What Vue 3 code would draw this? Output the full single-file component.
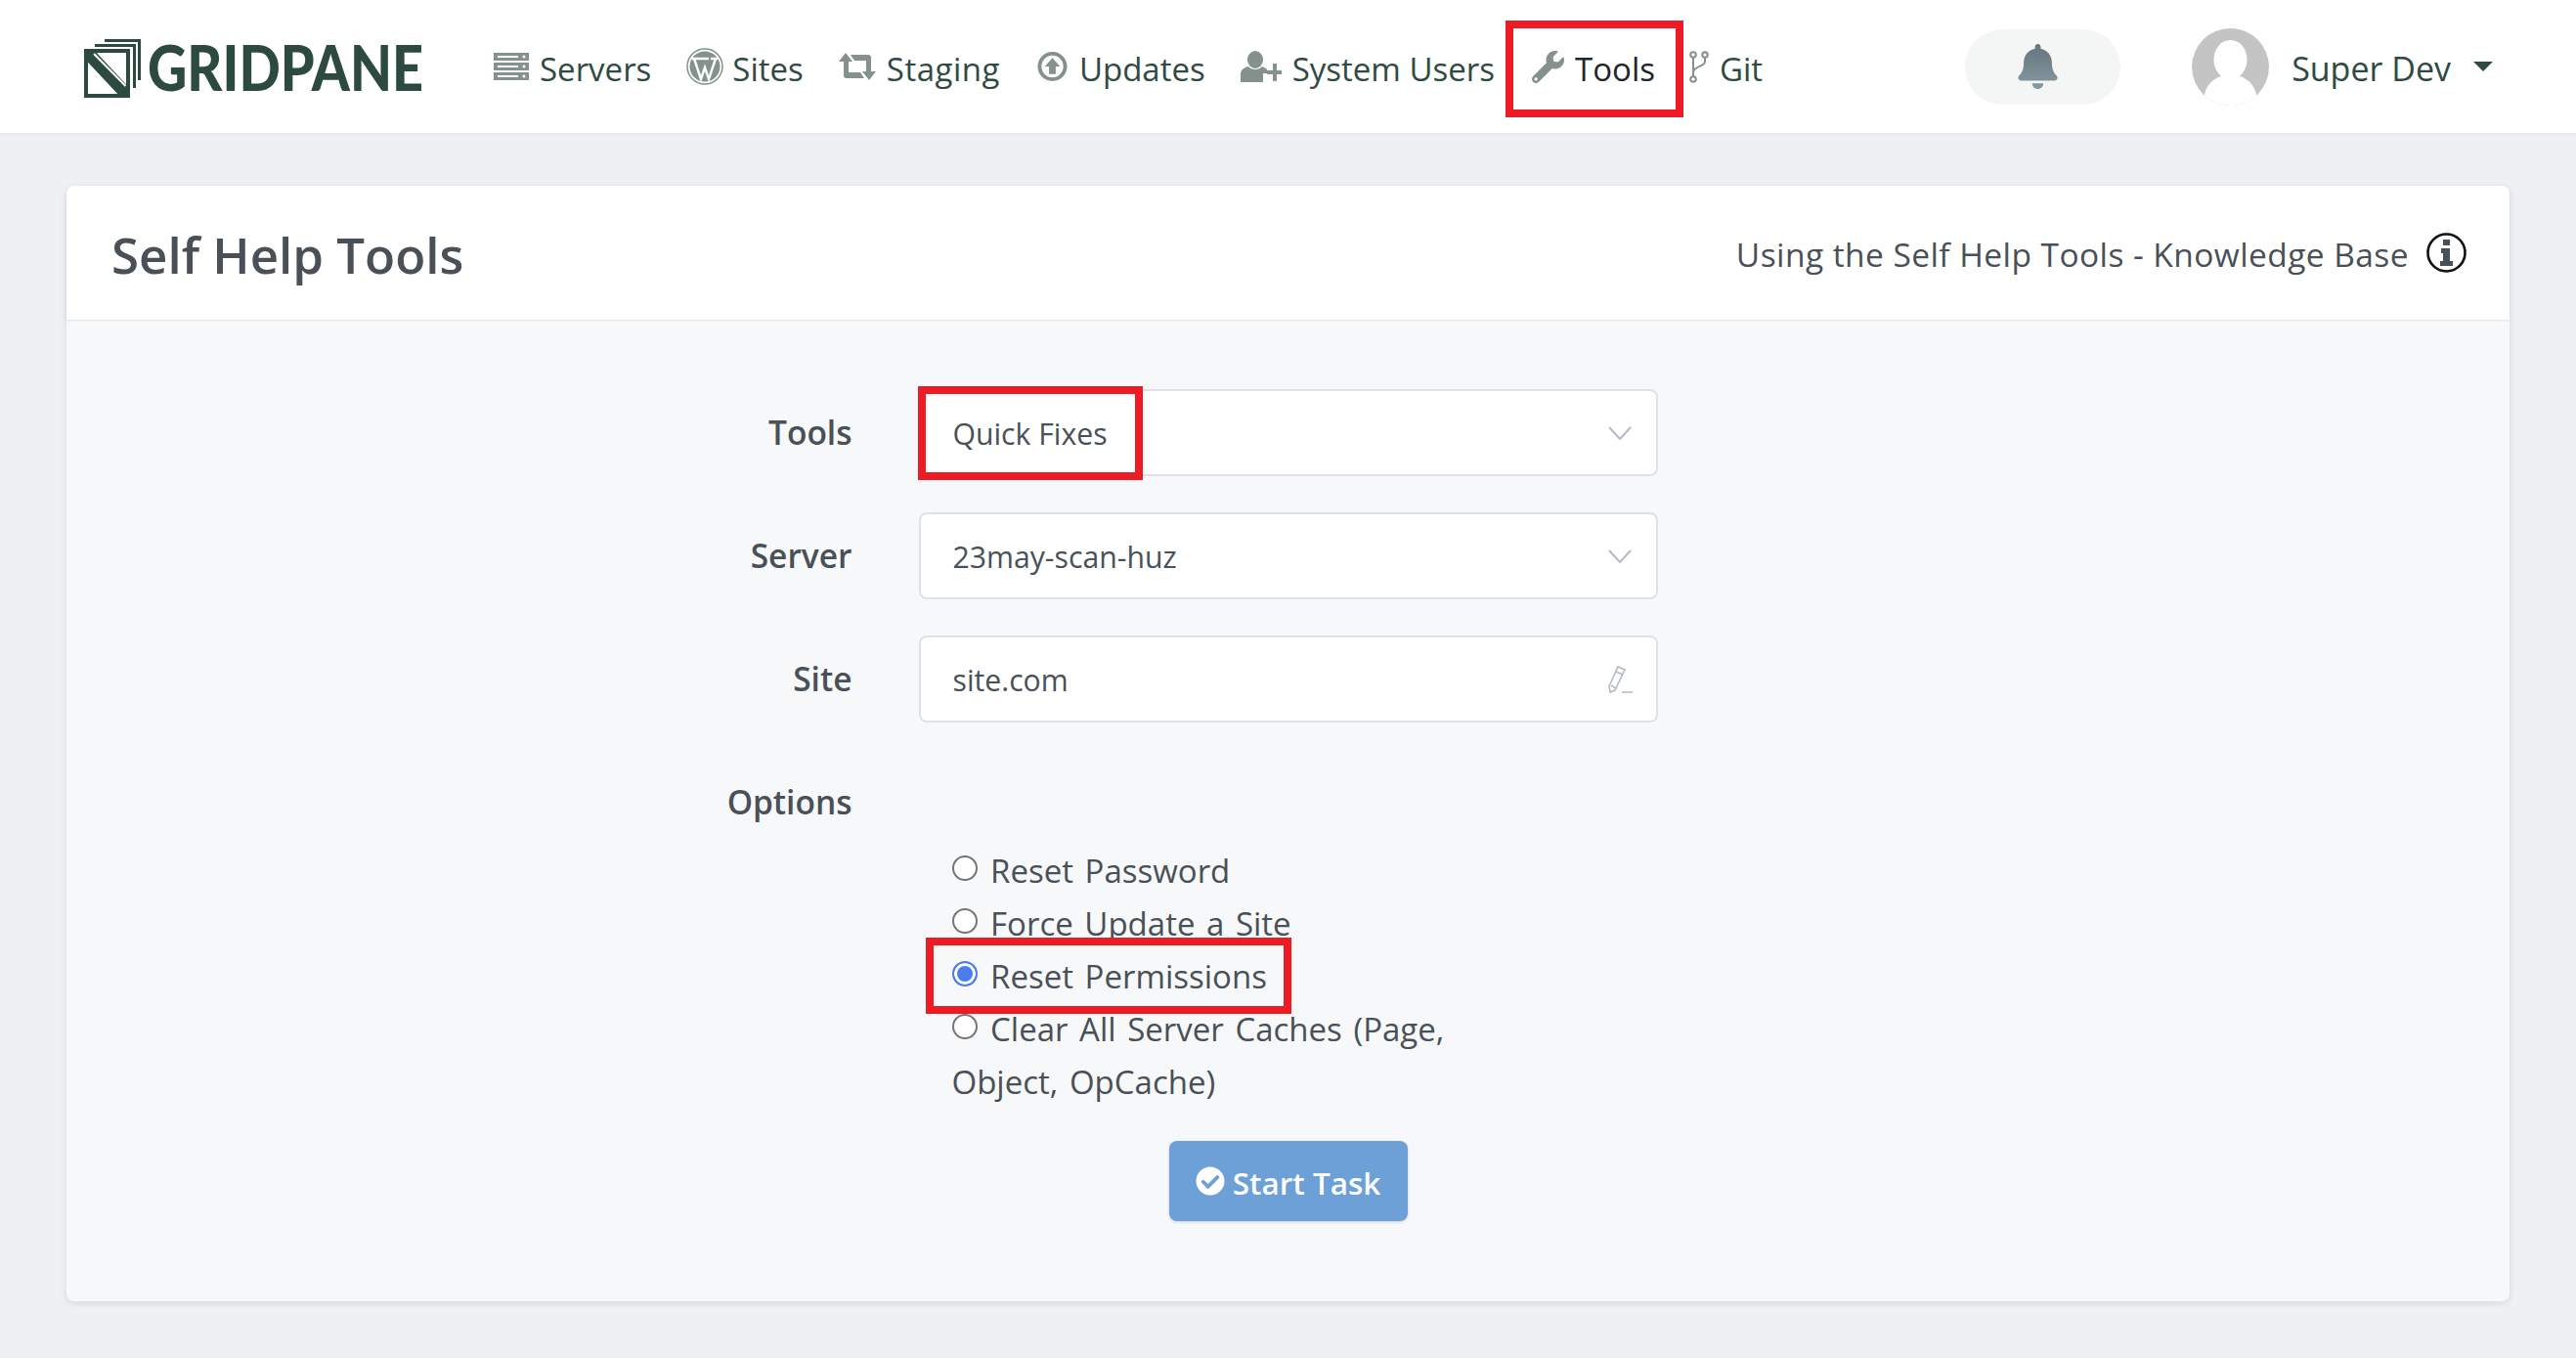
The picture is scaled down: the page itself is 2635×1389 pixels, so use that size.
<template>
  <div class="page">
    <nav class="topbar">
      <svg class="logo" width="350" height="64" viewBox="0 0 350 64">
        <defs>
          <clipPath id="paneclip"><rect x="0" y="14" width="47" height="50" /></clipPath>
        </defs>
        <g fill="none" stroke="#2d4a3e">
          <path d="M21 5.5H56.5V46" stroke-width="3" />
          <path d="M11 10.5H51.5V54" stroke-width="3" />
          <rect x="2" y="16" width="43" height="46" stroke-width="4" />
          <path d="M1 15L46 63" stroke-width="13" clip-path="url(#paneclip)" />
          <path d="M10 19L42.5 52" stroke="#fff" stroke-width="2" />
        </g>
        <text class="wordmark" x="65" y="57" textLength="282" lengthAdjust="spacingAndGlyphs">GRIDPANE</text>
      </svg>
      <ul class="menu">
        <li class="menu-item">
          <svg width="36" height="28" viewBox="0 0 36 28" fill="#84918c">
            <path d="M0 0h36v8H0zM0 10h36v8H0zM0 20h36v8H0z" />
            <path d="M4 3h21v2H4zM4 13h21v2H4zM4 23h21v2H4z" fill="#fff" />
            <circle cx="31" cy="4" r="1.5" fill="#fff" /><circle cx="31" cy="14" r="1.5" fill="#fff" /><circle cx="31" cy="24" r="1.5" fill="#fff" />
          </svg>
          <span>Servers</span>
        </li>
        <li class="menu-item">
          <svg width="38" height="38" viewBox="0 0 38 38">
            <circle cx="19" cy="19" r="18" fill="none" stroke="#84918c" stroke-width="1.5" />
            <circle cx="19" cy="19" r="15.5" fill="#84918c" />
            <path d="M8 11L15 32L19 20L23 32L30 11M6 11h9M14 11h9M25 11h7" fill="none" stroke="#fff" stroke-width="2.4" />
          </svg>
          <span>Sites</span>
        </li>
        <li class="menu-item">
          <svg width="38" height="28" viewBox="0 0 38 28" fill="#84918c">
            <path d="M7 0L14 9H10V20H22L26 26H8C6 26 5 25 5 23V9H0z" />
            <path d="M31 28L24 19H28V8H16L12 2H30C32 2 33 3 33 5V19H38z" />
          </svg>
          <span class="wide">Staging</span>
        </li>
        <li class="menu-item">
          <svg width="31" height="32" viewBox="0 0 32 32">
            <circle cx="16" cy="16" r="13.5" fill="none" stroke="#84918c" stroke-width="4" />
            <path d="M16 7L24 16H19.5V24H12.5V16H8z" fill="#84918c" />
          </svg>
          <span>Updates</span>
        </li>
        <li class="menu-item">
          <svg width="42" height="32" viewBox="0 0 42 32" fill="#84918c">
            <ellipse cx="15" cy="9" rx="8" ry="9" />
            <path d="M0 32V24C0 19 4 17 8 16C11 20 19 20 22 16C24 17 26 18 27 19V23H23V32z" />
            <path d="M33 13H37V20H42V24H37V31H33V24H27V20H33z" />
          </svg>
          <span>System Users</span>
        </li>
        <li class="menu-item active">
          <svg width="33" height="33" viewBox="0 0 512 512" fill="#84918c">
            <path d="M507.73 109.1c-2.24-9.03-13.54-12.09-20.12-5.51l-74.36 74.36-67.88-11.31-11.31-67.88 74.36-74.36c6.62-6.62 3.43-17.9-5.66-20.16-47.38-11.74-99.55.91-136.58 37.93-39.64 39.64-50.55 97.1-34.05 147.2L18.74 402.76c-24.99 24.99-24.99 65.51 0 90.5 24.99 24.99 65.51 24.99 90.5 0l213.21-213.21c50.12 16.71 107.47 5.68 147.37-34.22 37.07-37.07 49.7-89.32 37.91-136.73zM64 472c-13.25 0-24-10.75-24-24 0-13.26 10.75-24 24-24s24 10.74 24 24c0 13.25-10.75 24-24 24z" />
          </svg>
          <span>Tools</span>
          <i class="mark mark-nav"></i>
        </li>
        <li class="menu-item">
          <svg width="20" height="33" viewBox="0 0 20 33" fill="none" stroke="#84918c" stroke-width="2">
            <circle cx="4" cy="4" r="2.8" />
            <circle cx="16" cy="4" r="2.8" />
            <circle cx="4" cy="29" r="2.8" />
            <path d="M4 7V26M16 7V11C16 16 4 16 4 22" />
          </svg>
          <span>Git</span>
        </li>
      </ul>
      <div class="bell-pill">
        <svg width="41" height="46" viewBox="0 0 448 512">
          <defs>
            <linearGradient id="bellfill" x1="0" y1="0" x2="0" y2="1">
              <stop offset="0" stop-color="#66747f" />
              <stop offset="1" stop-color="#869aa0" />
            </linearGradient>
          </defs>
          <path fill="url(#bellfill)" d="M224 512c35.32 0 63.97-28.65 63.97-64H160.03c0 35.35 28.65 64 63.97 64zm215.39-149.71c-19.32-20.76-55.47-51.99-55.47-154.29 0-77.7-54.48-139.9-127.94-155.16V32c0-17.67-14.32-32-31.98-32s-31.98 14.33-31.98 32v20.84C118.56 68.1 64.08 130.3 64.08 208c0 102.3-36.15 133.53-55.47 154.29-6 6.45-8.66 14.16-8.61 21.71.11 16.4 12.98 32 32.1 32h383.8c19.12 0 32-15.6 32.1-32 .05-7.55-2.61-15.27-8.61-21.71z" />
        </svg>
      </div>
      <div class="account">
        <svg width="79" height="79" viewBox="0 0 79 79">
          <defs>
            <clipPath id="avatarclip"><circle cx="39.5" cy="39.5" r="39.5" /></clipPath>
          </defs>
          <g clip-path="url(#avatarclip)">
            <rect width="79" height="79" fill="#c4c4c4" />
            <ellipse cx="39.5" cy="32" rx="17" ry="20" fill="#fff" />
            <ellipse cx="39.5" cy="72" rx="27" ry="25" fill="#fff" />
          </g>
        </svg>
        <span class="account-name">Super Dev</span>
        <i class="caret"></i>
      </div>
    </nav>

    <section class="card">
      <header class="card-head">
        <h1>Self Help Tools</h1>
        <div class="kb-link">
          <span>Using the Self Help Tools - Knowledge Base</span>
          <svg width="41" height="41" viewBox="0 0 41 41">
            <circle cx="20.5" cy="20.5" r="19" fill="none" stroke="#111" stroke-width="2.6" />
            <path d="M17 7h7v6h-7zM15 16h9v13h3v5H14v-5h3v-8h-2z" fill="#495057" />
          </svg>
        </div>
      </header>

      <form class="form" @submit.prevent>
        <div class="row">
          <label>Tools</label>
          <div class="field">
            <span>Quick Fixes</span>
            <svg class="chevron" width="24" height="14" viewBox="0 0 24 14"><path d="M1 1L12 13L23 1" /></svg>
            <i class="mark mark-select"></i>
          </div>
        </div>
        <div class="row">
          <label>Server</label>
          <div class="field">
            <span>23may-scan-huz</span>
            <svg class="chevron" width="24" height="14" viewBox="0 0 24 14"><path d="M1 1L12 13L23 1" /></svg>
          </div>
        </div>
        <div class="row">
          <label>Site</label>
          <div class="field">
            <span>site.com</span>
            <svg class="pencil" width="26" height="28" viewBox="0 0 26 28">
              <path d="M10 1L17 4L7 25L2 27L1 21zM8 6L15 9M3 20L8 23M14 27H25" />
            </svg>
          </div>
        </div>
        <div class="row">
          <label>Options</label>
        </div>
        <div class="row options-row">
          <div class="options">
            <label v-for="opt in options" :key="opt.text" class="option">
              <input type="radio" name="fix" :checked="opt.checked" />
              {{ opt.text }}
              <i v-if="opt.checked" class="mark mark-radio"></i>
            </label>
          </div>
        </div>
        <div class="actions">
          <button type="submit" class="start">
            <svg width="30" height="30" viewBox="0 0 512 512" fill="#fff">
              <path d="M504 256c0 136.967-111.033 248-248 248S8 392.967 8 256 119.033 8 256 8s248 111.033 248 248zM227.314 387.314l184-184c6.248-6.248 6.248-16.379 0-22.627l-22.627-22.627c-6.248-6.249-16.379-6.249-22.628 0L216 308.118l-70.059-70.059c-6.248-6.248-16.379-6.248-22.628 0l-22.627 22.627c-6.248 6.248-6.248 16.379 0 22.627l104 104c6.249 6.249 16.379 6.249 22.628.001z" />
            </svg>
            <span>Start Task</span>
          </button>
        </div>
      </form>
    </section>
  </div>
</template>

<script setup>
const options = [
  { text: 'Reset Password' },
  { text: 'Force Update a Site' },
  { text: 'Reset Permissions', checked: true },
  { text: 'Clear All Server Caches (Page, Object, OpCache)' },
];
</script>

<style>
body {
  background: #eef0f3;
}
</style>

<style scoped>
.page {
  min-height: 1389px;
  background: #eef0f3;
  font-family: "Open Sans", "Noto Sans", sans-serif;
  font-size: 33.5px;
  color: #495057;
  box-sizing: border-box;
}

.topbar {
  height: 136px;
  background: #fff;
  display: flex;
  align-items: center;
  padding-left: 86px;
  box-shadow: 0 1px 4px rgba(60, 70, 90, 0.08);
}
.logo {
  flex: none;
  overflow: visible;
}
.wordmark {
  font-family: Lato, sans-serif;
  font-weight: 900;
  font-size: 64px;
  fill: #2d4a3e;
}
.menu {
  list-style: none;
  display: flex;
  gap: 36px;
  margin: 0 0 0 69px;
  padding: 0;
  font-size: 33px;
}
.menu-item {
  position: relative;
  display: flex;
  align-items: center;
  gap: 11px;
  color: #2f4a42;
}
.menu-item span {
  padding-top: 4px;
}
.menu-item .wide {
  letter-spacing: 0.5px;
}
.menu-item:nth-child(2) {
  gap: 9px;
}
.menu-item:nth-child(4) {
  margin-left: 2px;
  gap: 12px;
}
.menu-item:nth-child(6) {
  margin-left: 2px;
}
.menu-item:nth-child(7) {
  margin-left: -1px;
}
.menu-item.active {
  color: #212529;
}
.bell-pill {
  width: 159px;
  height: 77px;
  margin-left: auto;
  border-radius: 38px;
  background: #f4f6f6;
  display: flex;
  align-items: center;
  justify-content: center;
  padding-right: 10px;
  box-sizing: border-box;
}
.account {
  display: flex;
  align-items: center;
  margin: 0 85px 0 73px;
  color: #2f4a42;
}
.account-name {
  margin-left: 23px;
  padding-top: 4px;
  font-size: 34px;
}
.caret {
  width: 0;
  height: 0;
  margin-left: 23px;
  border-style: solid;
  border-width: 10px 10px 0;
  border-color: #2f4a42 transparent transparent;
}

.mark {
  position: absolute;
  border: 8px solid #ed1c24;
  pointer-events: none;
}
.mark-nav {
  left: -27px;
  top: -23px;
  width: 166px;
  height: 83px;
}
.mark-select {
  left: -3px;
  top: -5px;
  width: 214px;
  height: 80px;
}
.mark-radio {
  left: -27px;
  top: -13px;
  width: 358px;
  height: 62px;
}

.card {
  margin: 54px 68px 0;
  background: #f7f8fa;
  border-radius: 8px;
  box-shadow: 0 2px 6px rgba(60, 70, 90, 0.14);
}
.card-head {
  height: 137px;
  background: #fff;
  border-radius: 8px 8px 0 0;
  display: flex;
  align-items: center;
  justify-content: space-between;
  padding: 0 44px 0 46px;
  box-shadow: 0 1px 2px rgba(60, 70, 90, 0.12);
}
.card-head h1 {
  margin: 0;
  padding-top: 3px;
  font-size: 51px;
  font-weight: 600;
  color: #495057;
}
.kb-link {
  display: flex;
  align-items: center;
  gap: 18px;
}
.kb-link span {
  padding-top: 3px;
  letter-spacing: 0.43px;
}

.form {
  padding: 71px 0 82px;
}
.row {
  display: grid;
  grid-template-columns: 1fr 756px 1fr;
  column-gap: 68px;
  margin-bottom: 37px;
  align-items: center;
}
.row > label {
  justify-self: end;
  font-weight: 600;
  line-height: 89px;
}
.field {
  position: relative;
  height: 89px;
  box-sizing: border-box;
  background: #fff;
  border: 2px solid #dfe1e6;
  border-radius: 8px;
  padding: 0 23px 0 33px;
  display: flex;
  align-items: center;
  justify-content: space-between;
  font-size: 30.2px;
}
.field span {
  padding-top: 2px;
}
.chevron {
  margin-right: 2px;
  fill: none;
  stroke: #b4bac2;
  stroke-width: 2;
}
.pencil {
  fill: none;
  stroke: #b4bac2;
  stroke-width: 1.6;
}
.options-row {
  margin: -38px 0 33px;
}
.options {
  grid-column: 2;
  width: 520px;
  margin-left: 34px;
  font-size: 33px;
  word-spacing: 3px;
  line-height: 54px;
}
.option {
  position: relative;
  display: block;
}
.option input {
  appearance: none;
  width: 26px;
  height: 26px;
  margin: 0 2px 0 0;
  border: 2.5px solid #767676;
  border-radius: 50%;
  background: #fff;
  box-sizing: border-box;
  vertical-align: 2px;
}
.option input:checked {
  border-color: #4a7cf0;
  background: #4a7cf0;
  box-shadow: inset 0 0 0 3px #fff;
}
.actions {
  display: flex;
  justify-content: center;
}
.start {
  width: 244px;
  height: 82px;
  border: none;
  border-radius: 8px;
  background: #6ca0d6;
  color: #fff;
  font: 600 31.5px "Open Sans", "Noto Sans", sans-serif;
  display: flex;
  align-items: center;
  justify-content: center;
  gap: 8px;
  box-shadow: 0 1px 3px rgba(60, 70, 90, 0.2);
}
.start span {
  padding-top: 2px;
}
</style>
